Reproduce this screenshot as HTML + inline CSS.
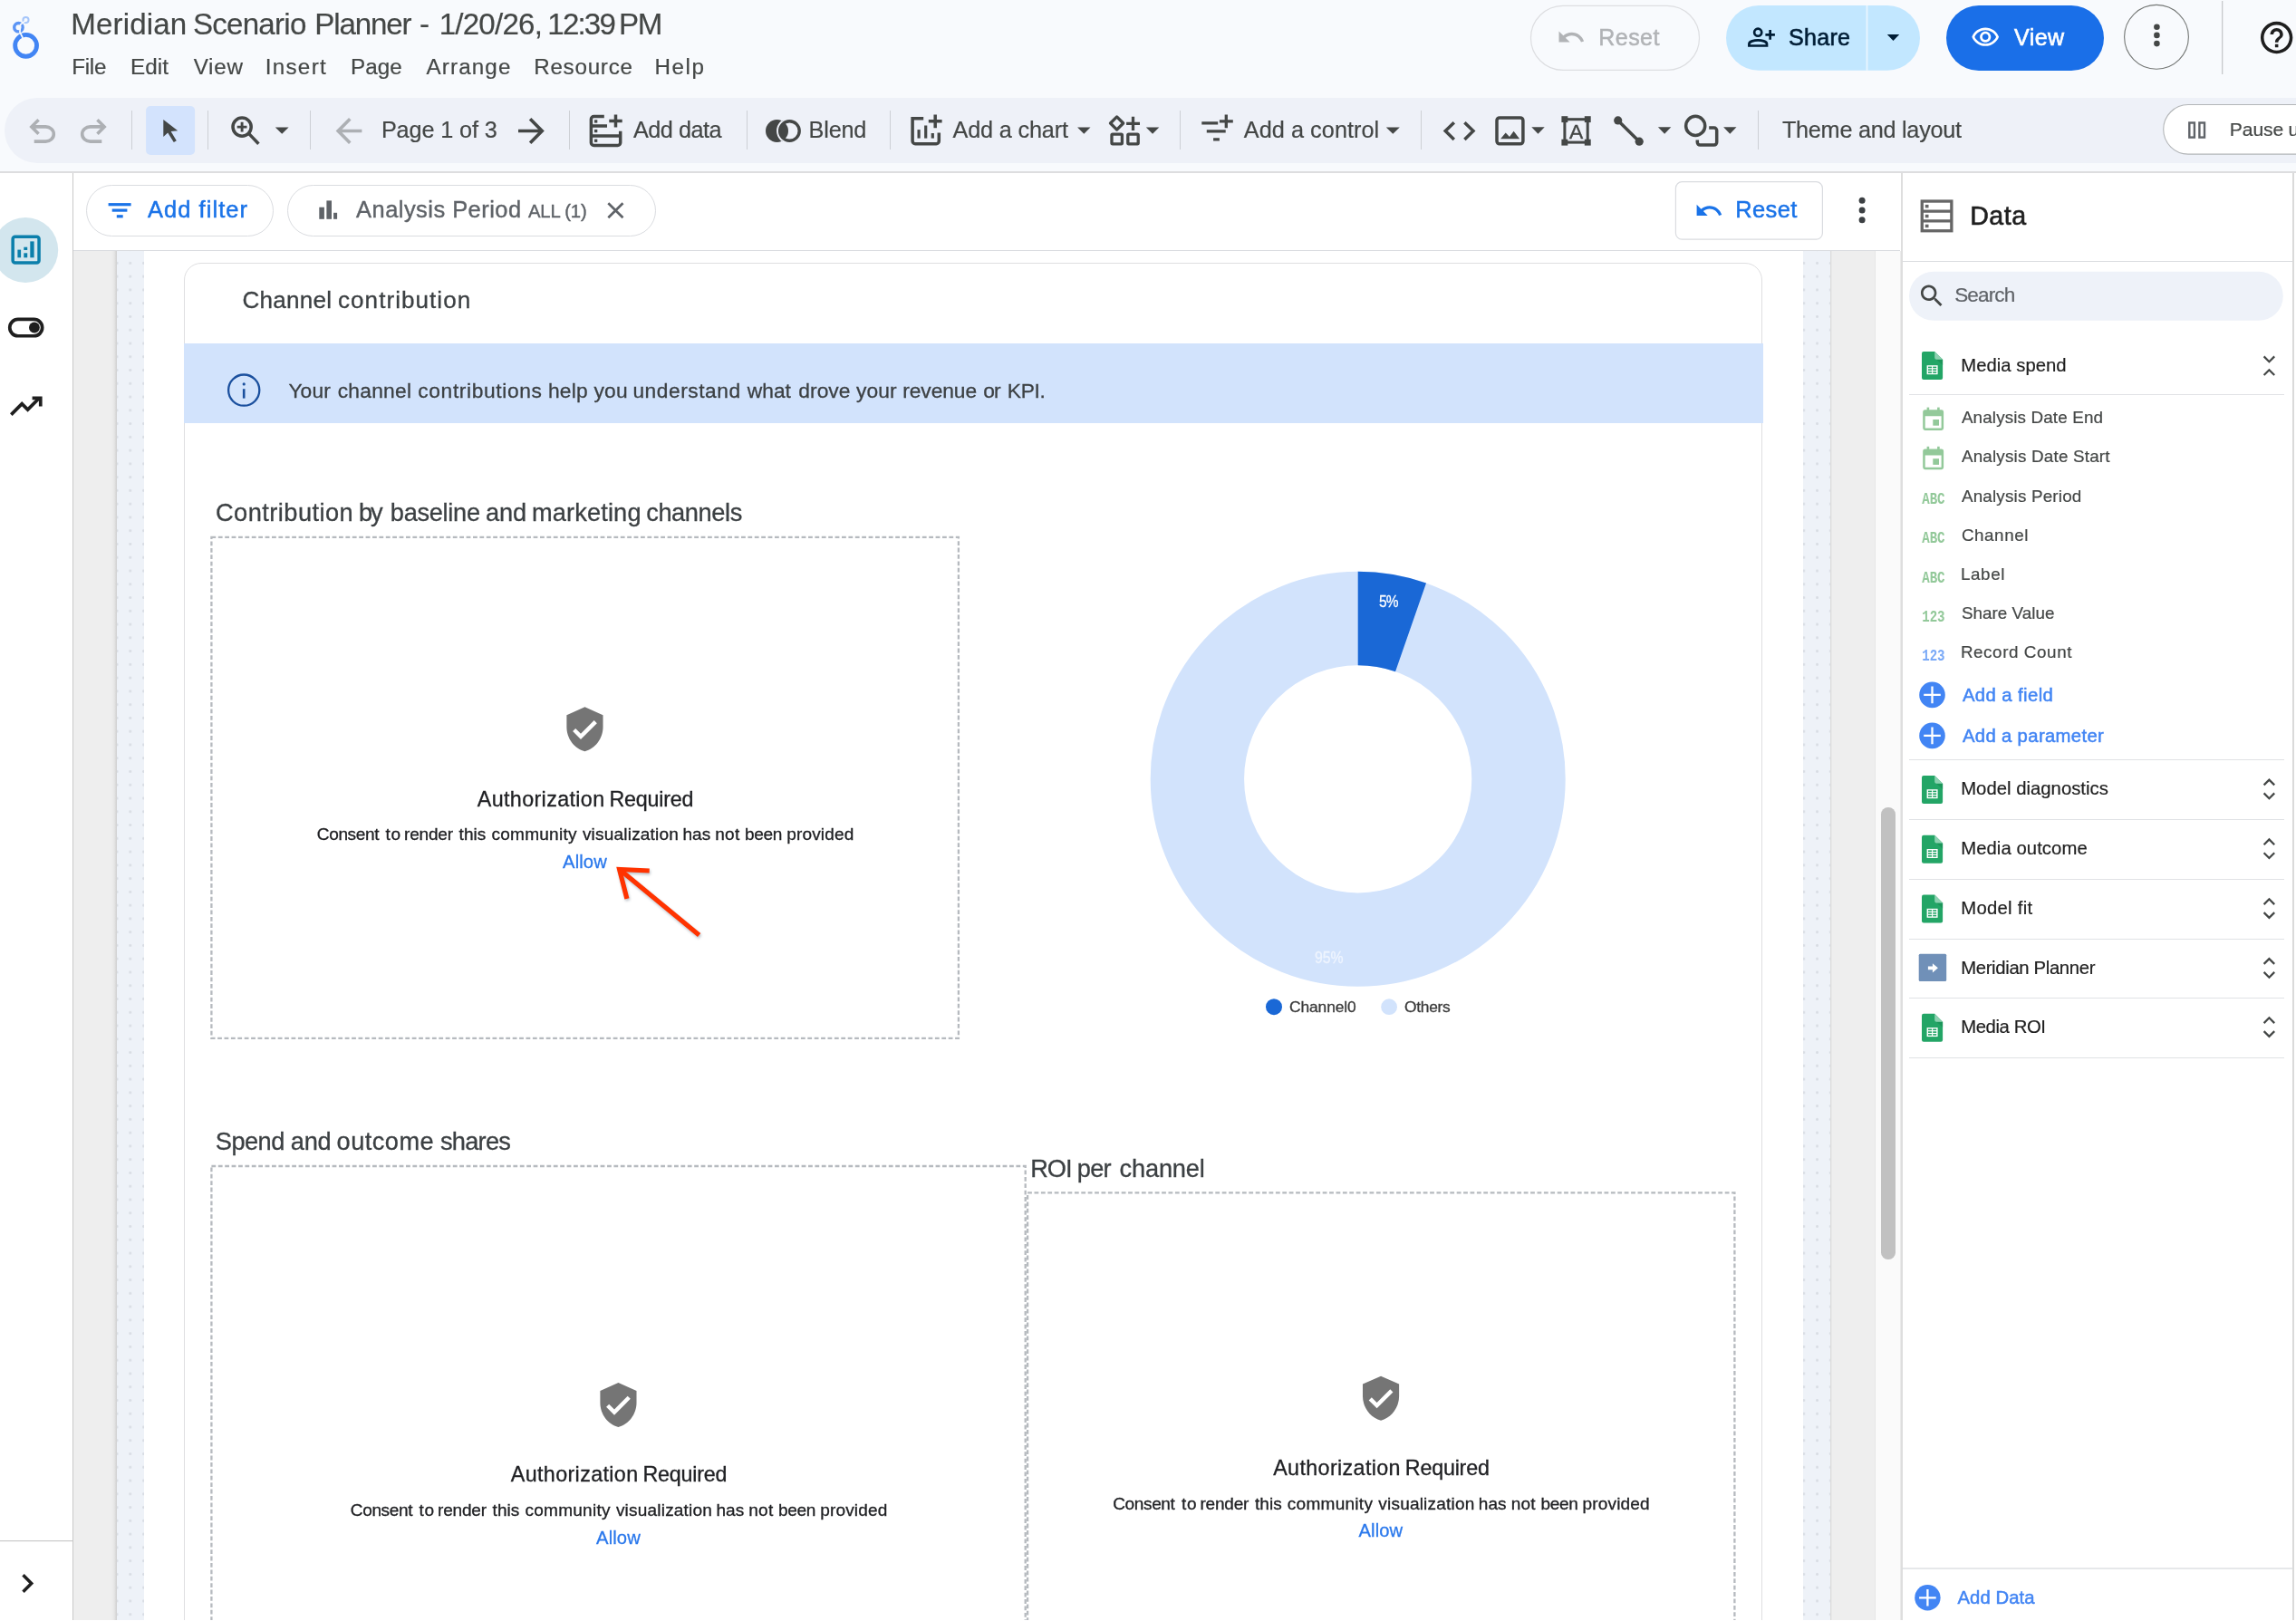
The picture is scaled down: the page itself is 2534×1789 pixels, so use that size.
<!DOCTYPE html>
<html lang="en"><head><meta charset="utf-8"><title>Meridian Scenario Planner - Looker Studio</title>
<style>
*{box-sizing:border-box}
html,body{margin:0;padding:0}
body{width:2534px;height:1789px;overflow:hidden;position:relative;background:#fff;font-family:'Liberation Sans',sans-serif}
.t{position:absolute;white-space:pre;line-height:1;font-kerning:normal}
.tw{position:absolute;left:0;top:0}
.abs{position:absolute}
svg{position:absolute;overflow:visible}
#hdr{will-change:transform;position:absolute;left:0;top:0;width:2534px;height:191px;background:#f8fafd;border-bottom:2px solid #dddddf;overflow:hidden}
#toolbar{position:absolute;left:4.8px;top:107.6px;width:2700px;height:72.4px;border-radius:36.2px;background:#eef1f8}
.sep{position:absolute;top:122px;width:1.4px;height:43px;background:#cdd0d5}
.pill{position:absolute;border-radius:40px}
#rail{will-change:transform;position:absolute;left:0;top:191px;width:81px;height:1598px;background:#fff;border-right:1px solid #c9c9c9}
#fbar{will-change:transform;position:absolute;left:81px;top:191px;width:2018px;height:86px;background:#fff;border-bottom:1px solid #dadce0}
.chip{position:absolute;top:12.7px;height:57px;border:1px solid #dadce0;border-radius:29px;background:#fff}
#stage{will-change:transform;position:absolute;left:81px;top:277px;width:2018px;height:1512px;background:#eeeeee;overflow:hidden}
#panel{will-change:transform;position:absolute;left:2097px;top:191px;width:437px;height:1598px;background:#fff;overflow:hidden}
.hr{position:absolute;left:10px;width:414px;height:1.4px;background:#e0e2e5}
</style></head>
<body>
<header id="hdr">
 <div id="toolbar"></div>
 <div class="sep" style="left:144.8px"></div><div class="sep" style="left:228.8px"></div><div class="sep" style="left:341.7px"></div><div class="sep" style="left:627.8px"></div><div class="sep" style="left:823.7px"></div><div class="sep" style="left:981.7px"></div><div class="sep" style="left:1301.5px"></div><div class="sep" style="left:1567.8px"></div><div class="sep" style="left:1939.7px"></div>
 
<svg width="2534" height="191" viewBox="0 0 2534 191" style="left:0;top:0">
 <!-- looker studio logo -->
 <g fill="none">
  <circle cx="28.6" cy="50.3" r="11.93" stroke="#4285f4" stroke-width="4.85"/>
  <circle cx="20.4" cy="30.2" r="4.7" stroke="#5b94f5" stroke-width="3.4"/>
  <circle cx="28.5" cy="22.1" r="3.05" stroke="#a5c5fa" stroke-width="2"/>
  <polyline points="28.2,22.6 22.6,27.2 21.9,35.4 25.2,42" stroke="#f8fafd" stroke-width="1.7"/>
 </g>
 <!-- reset (disabled) -->
 <rect x="1689.5" y="6.4" width="186" height="71" rx="35.5" fill="none" stroke="#dddee1" stroke-width="1.2"/>
 <svg x="1717.8" y="25" width="32.4" height="32.4" viewBox="0 0 24 24"><path fill="#b1b3b6" d="M12.5 8c-2.65 0-5.05.99-6.9 2.6L2 7v9h9l-3.62-3.62c1.39-1.16 3.16-1.88 5.12-1.88 3.54 0 6.55 2.31 7.6 5.5l2.37-.78C21.08 11.03 17.15 8 12.5 8z"/></svg>
 <!-- share -->
 <rect x="1905" y="6" width="214" height="71.8" rx="35.9" fill="#c2e7ff"/>
 <rect x="2059.6" y="6" width="1.8" height="71.8" fill="#e9f6ff"/>
 <g fill="none" stroke="#001d35" stroke-width="2.7">
  <circle cx="1940.2" cy="35.7" r="4.05"/>
  <path d="M1930.4,50.5 V48.6 C1930.4,45.6 1936,44.4 1940.2,44.4 C1944.4,44.4 1950,45.6 1950,48.6 V50.5 Z" stroke-linejoin="miter"/>
  <path d="M1948.4,38.4 H1958.9 M1953.65,33 V43.8"/>
 </g>
 <polygon points="2082.8,38.1 2096.2,38.1 2089.5,44.9" fill="#001d35"/>
 <!-- view -->
 <rect x="2148" y="6" width="174" height="71.9" rx="35.9" fill="#1a6fe8"/>
 <svg x="2175" y="25.2" width="32.4" height="32.4" viewBox="0 0 24 24"><path fill="#fff" d="M12 6c3.79 0 7.17 2.13 8.82 5.5C19.17 14.87 15.79 17 12 17s-7.17-2.13-8.82-5.5C4.83 8.13 8.21 6 12 6m0-2C7 4 2.73 7.11 1 11.5 2.73 15.89 7 19 12 19s9.27-3.11 11-7.5C21.27 7.11 17 4 12 4zm0 5c1.38 0 2.5 1.12 2.5 2.5S13.38 14 12 14s-2.5-1.12-2.5-2.5S10.620 9 12 9m0-2c-2.48 0-4.5 2.02-4.5 4.5S9.52 16 12 16s4.5-2.02 4.500-4.5S14.48 7 12 7z"/></svg>
 <!-- more -->
 <circle cx="2380" cy="40.8" r="35.4" fill="none" stroke="#747775" stroke-width="1.1"/>
 <circle cx="2380.4" cy="29.8" r="3.3" fill="#444746"/><circle cx="2380.4" cy="38.9" r="3.3" fill="#444746"/><circle cx="2380.4" cy="48.1" r="3.3" fill="#444746"/>
 <rect x="2452" y="1" width="1.3" height="81" fill="#c7c9cc"/>
 <!-- help -->
 <svg x="2491.4" y="20.3" width="42.5" height="42.5" viewBox="0 0 24 24"><path fill="#1f1f1f" d="M11 18h2v-2h-2v2zm1-16C6.48 2 2 6.48 2 12s4.480 10 10 10 10-4.48 10-10S17.52 2 12 2zm0 18c-4.41 0-8-3.59-8-8s3.590-8 8-8 8 3.590 8 8-3.590 8-8 8zm0-14c-2.21 0-4 1.79-4 4h2c0-1.100.9-2 2-2s2 .9 2 2c0 2-3 1.750-3 5h2c0-2.250 3-2.500 3-5 0-2.210-1.790-4-4-4z"/></svg>
</svg>
 
<svg width="2534" height="191" viewBox="0 0 2534 191" style="left:0;top:0">
 <svg x="25.1" y="123.7" width="43.2" height="43.2" viewBox="0 -960 960 960"><path fill="#adb0b4" d="M280-200v-80h284q63 0 109.5-40T720-420q0-60-46.5-100T564-560H312l104 104-56 56-200-200 200-200 56 56-104 104h252q97 0 166.5 63T800-420q0 94-69.5 157T564-200H280Z"/></svg>
 <svg x="81.7" y="123.7" width="43.2" height="43.2" viewBox="0 -960 960 960"><path fill="#adb0b4" transform="translate(960,0) scale(-1,1)" d="M280-200v-80h284q63 0 109.5-40T720-420q0-60-46.5-100T564-560H312l104 104-56 56-200-200 200-200 56 56-104 104h252q97 0 166.5 63T800-420q0 94-69.5 157T564-200H280Z"/></svg>
 <svg x="363.4" y="122.9" width="43.2" height="43.2" viewBox="0 -960 960 960"><path fill="#adb0b4" d="m313-440 224 224-57 56-320-320 320-320 57 56-224 224h487v80H313Z"/></svg>
 <svg x="564.8" y="122.9" width="43.2" height="43.2" viewBox="0 -960 960 960"><path fill="#444746" transform="translate(960,0) scale(-1,1)" d="m313-440 224 224-57 56-320-320 320-320 57 56-224 224h487v80H313Z"/></svg>
 <rect x="161.1" y="117.1" width="54" height="53.8" rx="5" fill="#d3e3fd"/>
 <polygon points="180.3,132 180.3,150.9 185.2,146.5 191.8,156.9 194.8,155.2 188.6,145 196.2,144.3" fill="#444746"/>
 <g fill="none" stroke="#444746" stroke-width="3.5">
  <circle cx="267.1" cy="140.1" r="10.1"/>
  <path d="M274.8,147.6 L285.4,158.7"/>
  <path d="M261.7,140.1 H272.5 M267.1,134.7 V145.5" stroke-width="2.9"/>
 </g>
 <polygon points="303.8,140.4 318.6,140.4 311.20000000000005,147.8" fill="#444746"/>
 <!-- add data -->
 <g fill="none" stroke="#444746" stroke-width="3.5">
  <path d="M666.8,128.6 H655.4 a3,3 0 0 0 -3,3 V157.5 a3,3 0 0 0 3,3 H681.7 a3,3 0 0 0 3,-3 V144.7"/>
  <path d="M652.4,139 H670 M652.4,150 H684.7"/>
  <path d="M672.3,133.5 H686.7 M679.5,126.6 V140.4"/>
 </g>
 <g fill="#444746"><rect x="656" y="132.3" width="3.3" height="3.3"/><rect x="656" y="142.9" width="3.300" height="3.3"/><rect x="656" y="153.600" width="3.3" height="3.3"/></g>
 <!-- blend -->
 <defs><clipPath id="cpA"><circle cx="857.5" cy="144.5" r="12.5"/></clipPath></defs>
 <circle cx="857.5" cy="144.5" r="12.5" fill="#444746"/>
 <circle cx="871.4" cy="144.5" r="10.8" fill="none" stroke="#444746" stroke-width="3.4"/>
 <circle cx="871.4" cy="144.5" r="13.4" fill="none" stroke="#eef1f8" stroke-width="1.9" clip-path="url(#cpA)"/>
 <!-- add chart -->
 <g fill="none" stroke="#444746" stroke-width="3.5">
  <path d="M1019.2,130.700 H1007.1 V155.7 a3,3 0 0 0 3,3 H1033.3 a3,3 0 0 0 3,-3 V146.5"/>
  <path d="M1024.8,133.800 H1039.6 M1032.2,126.400 V141.2"/>
 </g>
 <g fill="#444746"><rect x="1012.5" y="143.1" width="3.2" height="9.5"/><rect x="1020.100" y="138.5" width="3.2" height="14.1"/><rect x="1027.7" y="147" width="3.2" height="5.6"/></g>
 <polygon points="1189.1,140.5 1203.5,140.5 1196.3,147.8" fill="#444746"/>
 <!-- community -->
 <g fill="none" stroke="#444746" stroke-width="3.3" stroke-linejoin="round">
  <polygon points="1232.6,128.9 1239.7,136 1232.6,143.1 1225.5,136"/>
  <rect x="1227" y="148.1" width="11.4" height="10.7" rx="1"/>
  <rect x="1244.8" y="148.1" width="11.400" height="10.7" rx="1"/>
  <path d="M1243.100,136.3 H1258 M1250.5,128.7 V144" stroke-linejoin="miter"/>
 </g>
 <polygon points="1264.8,140.5 1279.3,140.5 1272.05,147.8" fill="#444746"/>
 <!-- control -->
 <g fill="none" stroke="#444746" stroke-width="3.3">
  <path d="M1326.3,135.8 H1344.2 M1331.8,144.8 H1352.7 M1339.100,153.8 H1345.9"/>
  <path d="M1345.9,133.800 H1360.8 M1353.3,126.400 V141.2"/>
 </g>
 <polygon points="1529.8,140.5 1544.8,140.5 1537.3,147.8" fill="#444746"/>
 <!-- code -->
 <g fill="none" stroke="#444746" stroke-width="3.5">
  <polyline points="1604.8,135.200 1595.2,144.600 1604.8,154"/>
  <polyline points="1616.4,135.200 1626,144.600 1616.4,154"/>
  <rect x="1652" y="129.9" width="28.9" height="28.9" rx="3"/>
 </g>
 <polygon points="1656.1,153.3 1661.7,146.5 1666,150.9 1670.6,144.8 1677.1,153.3" fill="#444746"/>
 <polygon points="1690.3,140.3 1704.7,140.3 1697.5,147.8" fill="#444746"/>
 <!-- text box -->
 <g fill="#444746">
  <rect x="1723.4" y="128.200" width="6.9" height="6.9"/><rect x="1748.8" y="128.200" width="6.9" height="6.9"/>
  <rect x="1723.4" y="153.7" width="6.9" height="6.9"/><rect x="1748.8" y="153.7" width="6.9" height="6.9"/>
 </g>
 <rect x="1726.9" y="131.700" width="25.3" height="25.4" fill="none" stroke="#444746" stroke-width="3"/>
 <text x="1739.6" y="153.3" font-family="Liberation Sans, sans-serif" font-size="22.8" text-anchor="middle" fill="#444746" stroke="#444746" stroke-width="0.4">A</text>
 <!-- line -->
 <path d="M1785.7,132.9 L1809.2,156.2" stroke="#444746" stroke-width="3.5" fill="none"/>
 <circle cx="1785.7" cy="132.9" r="4.6" fill="#444746"/><circle cx="1809.2" cy="156.2" r="4.6" fill="#444746"/>
 <polygon points="1829.9,140.3 1844.3,140.3 1837.1,147.8" fill="#444746"/>
 <!-- shape -->
 <g fill="none" stroke="#444746" stroke-width="3.5">
  <circle cx="1871.2" cy="138.9" r="10.55"/>
  <path d="M1886.2,141 H1891.7 a3,3 0 0 1 3,3 V157.1 a3,3 0 0 1 -3,3 H1876.3 a3,3 0 0 1 -3,-3 V154.4"/>
 </g>
 <polygon points="1902.1,140.3 1916.5,140.3 1909.3,147.8" fill="#444746"/>
 <!-- pause button -->
 <rect x="2387.7" y="115.500" width="220" height="54.6" rx="27.3" fill="#fff" stroke="#b3b6b8" stroke-width="1.1"/>
 <g fill="none" stroke="#5f6368" stroke-width="2.4"><rect x="2416.3" y="135.500" width="5.6" height="16.1"/><rect x="2427.400" y="135.500" width="5.6" height="16.1"/></g>
</svg>
 <div id="titlebar"><span class="tw"><span class="t" style="left:78.2px;top:10.0px;font-size:33.12px;color:#444746;letter-spacing:0.149px;-webkit-text-stroke:0.2px #444746">Meridian</span> <span class="t" style="left:212.9px;top:10.0px;font-size:33.12px;color:#444746;letter-spacing:-0.752px;-webkit-text-stroke:0.2px #444746">Scenario</span> <span class="t" style="left:347.3px;top:10.0px;font-size:33.12px;color:#444746;letter-spacing:-1.133px;-webkit-text-stroke:0.2px #444746">Planner</span> <span class="t" style="left:462.9px;top:10.0px;font-size:33.12px;color:#444746;letter-spacing:0px;-webkit-text-stroke:0.2px #444746">-</span> <span class="t" style="left:484.7px;top:10.0px;font-size:33.12px;color:#444746;letter-spacing:-0.781px;-webkit-text-stroke:0.2px #444746">1/20/26,</span> <span class="t" style="left:604.3px;top:10.0px;font-size:33.12px;color:#444746;letter-spacing:-1.835px;-webkit-text-stroke:0.2px #444746">12:39</span> <span class="t" style="left:683.1px;top:10.0px;font-size:33.12px;color:#444746;letter-spacing:-1.384px;-webkit-text-stroke:0.2px #444746">PM</span></span><span class="t" style="left:79.2px;top:61.5px;font-size:24.22px;color:#444746;letter-spacing:-0.285px;-webkit-text-stroke:0.2px #444746">File</span>
<span class="t" style="left:144.0px;top:61.5px;font-size:24.22px;color:#444746;letter-spacing:0.065px;-webkit-text-stroke:0.2px #444746">Edit</span>
<span class="t" style="left:213.7px;top:61.5px;font-size:24.22px;color:#444746;letter-spacing:0.711px;-webkit-text-stroke:0.2px #444746">View</span>
<span class="t" style="left:292.7px;top:61.5px;font-size:24.22px;color:#444746;letter-spacing:1.292px;-webkit-text-stroke:0.2px #444746">Insert</span>
<span class="t" style="left:387.0px;top:61.5px;font-size:24.22px;color:#444746;letter-spacing:0.036px;-webkit-text-stroke:0.2px #444746">Page</span>
<span class="t" style="left:470.4px;top:61.5px;font-size:24.22px;color:#444746;letter-spacing:1.151px;-webkit-text-stroke:0.2px #444746">Arrange</span>
<span class="t" style="left:589.2px;top:61.5px;font-size:24.22px;color:#444746;letter-spacing:0.731px;-webkit-text-stroke:0.2px #444746">Resource</span>
<span class="t" style="left:722.6px;top:61.5px;font-size:24.22px;color:#444746;letter-spacing:1.52px;-webkit-text-stroke:0.2px #444746">Help</span>
<span class="t" style="left:1764.3px;top:28.7px;font-size:25.05px;color:#b1b3b6;letter-spacing:0.407px;font-weight:500;-webkit-text-stroke:0.5px #b1b3b6">Reset</span>
<span class="t" style="left:1974.0px;top:28.7px;font-size:25.05px;color:#001d35;letter-spacing:0.298px;font-weight:500;-webkit-text-stroke:0.6px #001d35">Share</span>
<span class="t" style="left:2223.1px;top:28.6px;font-size:25.05px;color:#ffffff;letter-spacing:0.384px;font-weight:500;-webkit-text-stroke:0.6px #ffffff">View</span>
</div>
 <nav id="tools"><span class="t" style="left:420.9px;top:130.8px;font-size:25.25px;color:#444746;letter-spacing:-0.132px;-webkit-text-stroke:0.2px #444746">Page 1 of 3</span>
<span class="t" style="left:698.9px;top:130.8px;font-size:25.25px;color:#444746;letter-spacing:-0.478px;-webkit-text-stroke:0.2px #444746">Add data</span>
<span class="t" style="left:892.6px;top:130.8px;font-size:25.25px;color:#444746;letter-spacing:-0.209px;-webkit-text-stroke:0.2px #444746">Blend</span>
<span class="t" style="left:1051.5px;top:130.8px;font-size:25.25px;color:#444746;letter-spacing:-0.172px;-webkit-text-stroke:0.2px #444746">Add a chart</span>
<span class="t" style="left:1372.8px;top:130.8px;font-size:25.25px;color:#444746;letter-spacing:0.052px;-webkit-text-stroke:0.2px #444746">Add a control</span>
<span class="t" style="left:1966.9px;top:130.8px;font-size:25.25px;color:#444746;letter-spacing:-0.261px;-webkit-text-stroke:0.2px #444746">Theme and layout</span>
<span class="tw"><span class="t" style="left:2460.8px;top:132.4px;font-size:21.11px;color:#444746;letter-spacing:-0.079px;-webkit-text-stroke:0.2px #444746">Pause</span> <span class="t" style="left:2525.6px;top:132.4px;font-size:21.11px;color:#444746;letter-spacing:0.222px;-webkit-text-stroke:0.2px #444746">updates</span></span></nav>
</header>
<aside id="rail">
<svg width="81" height="1598" viewBox="0 191 81 1598" style="left:0;top:0">
 <circle cx="28.1" cy="276" r="36.1" fill="#d3e6ee"/>
 <rect x="14.15" y="261.15" width="28.9" height="28.8" rx="2.5" fill="none" stroke="#0b7fab" stroke-width="3.5"/>
 <g fill="#0b7fab"><rect x="19.4" y="275.600" width="3.7" height="8.7"/><rect x="26.3" y="272.7" width="3.9" height="3.300"/><rect x="26.3" y="279.3" width="3.9" height="5"/><rect x="33.3" y="266.400" width="4.3" height="17.9"/></g>
 <rect x="10.75" y="352.45" width="35.9" height="18.300" rx="9.15" fill="none" stroke="#1f1f1f" stroke-width="3.7"/>
 <circle cx="37.9" cy="361.5" r="5.9" fill="#1f1f1f"/>
 <g fill="none" stroke="#1f1f1f" stroke-width="3.7"><polyline points="12.3,457.6 24.2,445.7 30.6,452.1 43.4,439.3"/><path d="M35.6,439.35 H44.75 V448.5"/></g>
 <rect x="0" y="1700" width="80" height="1.2" fill="#c9c9c9"/>
 <polyline points="25.5,1738.3 34.7,1747.5 25.500,1756.7" fill="none" stroke="#1f1f1f" stroke-width="3.5"/>
</svg></aside>
<section id="fbar">
 <div class="chip" style="left:14.2px;width:206.8px"></div>
 <div class="chip" style="left:236.2px;width:406.7px"></div>
 
<svg width="2018" height="86" viewBox="81 191 2018 86" style="left:0;top:0">
 <g fill="#1a73e8"><rect x="119.6" y="224.100" width="25" height="3.2"/><rect x="123.700" y="230.500" width="16.7" height="3.2"/><rect x="128.8" y="237.200" width="6.9" height="3.200"/></g>
 <g fill="#5f6368"><rect x="352.3" y="228.7" width="5.6" height="13.1"/><rect x="360.4" y="221.4" width="5.600" height="20.4"/><rect x="368.1" y="234.8" width="4" height="7"/></g>
 <path d="M671.3,224.300 L687.5,240.300 M687.5,224.300 L671.3,240.300" stroke="#5f6368" stroke-width="2.7" fill="none"/>
 <rect x="1849.4" y="200.700" width="162" height="63.5" rx="7" fill="#fff" stroke="#dadce0" stroke-width="1.2"/>
 <svg x="1869.9" y="216.35" width="32.4" height="32.4" viewBox="0 0 24 24"><path fill="#1a73e8" d="M12.5 8c-2.650 0-5.050.99-6.9 2.600L2 7v9h9l-3.620-3.620c1.390-1.160 3.160-1.880 5.120-1.880 3.540 0 6.550 2.310 7.600 5.500l2.370-.78C21.080 11.030 17.150 8 12.500 8z"/></svg>
 <g fill="#3c4043"><circle cx="2055.1" cy="221.300" r="3.5"/><circle cx="2055.1" cy="232.100" r="3.5"/><circle cx="2055.100" cy="242.800" r="3.5"/></g>
</svg>
 <span class="t" style="left:81.9px;top:28.0px;font-size:25.46px;color:#1a73e8;letter-spacing:1.081px;font-weight:500;-webkit-text-stroke:0.5px #1a73e8">Add filter</span>
<span class="t" style="left:312.1px;top:28.0px;font-size:25.46px;color:#5f6368;letter-spacing:0.466px;font-weight:500;-webkit-text-stroke:0.4px #5f6368">Analysis Period</span>
<span class="t" style="left:502.0px;top:31.7px;font-size:20.29px;color:#5f6368;letter-spacing:-0.176px;font-weight:500;-webkit-text-stroke:0.4px #5f6368">ALL (1)</span>
<span class="t" style="left:1834.3px;top:27.9px;font-size:25.46px;color:#1a73e8;letter-spacing:0.37px;font-weight:500;-webkit-text-stroke:0.5px #1a73e8">Reset</span>

</section>
<main id="stage">
 <div class="abs" style="left:42px;top:0;width:6px;height:1512px;background:linear-gradient(90deg,#eee,#e6e6e6 50%,#cfcfcf)"></div>
 <div class="abs" style="left:47.9px;top:0;width:29.7px;height:1512px;background-color:#eef2f8;background-image:radial-gradient(circle,#d9dde4 1.2px,rgba(217,221,228,0) 1.7px);background-size:14.77px 14.77px;background-position:-7.39px 6px"></div>
 <div class="abs" style="left:77.6px;top:0;width:1831.5px;height:1512px;background:#fff"></div>
 <div class="abs" style="left:1909.1px;top:0;width:29.5px;height:1512px;background-color:#eef2f8;background-image:radial-gradient(circle,#d9dde4 1.2px,rgba(217,221,228,0) 1.7px);background-size:14.77px 14.77px;background-position:-7.39px 6px;background-position:-6.6px 6px"></div>
 <div class="abs" style="left:1938.6px;top:0;width:2px;height:1512px;background:linear-gradient(90deg,#d6d6d6,#eee)"></div>
 <div class="abs" style="left:1988px;top:0;width:29px;height:1512px;background:#fafafa;border-left:1px solid #e6e6e6"></div>
 <div class="abs" style="left:1995.3px;top:614px;width:15.5px;height:498.5px;border-radius:7.8px;background:#c1c1c1"></div>
 <article class="abs" style="left:121.7px;top:13.3px;width:1742.6px;height:1600px;border:1.8px solid #dfdfe1;border-radius:19px;background:#fff"></article>
 <div class="abs" style="left:121.5px;top:102.1px;width:1743px;height:88.2px;background:#d2e3fc"></div>
 
<svg width="2018" height="1512" viewBox="81 277 2018 1512" style="left:0;top:0">
 <!-- info icon -->
 <circle cx="269.2" cy="430.6" r="17.1" fill="none" stroke="#1b509e" stroke-width="2.3"/>
 <circle cx="269.2" cy="423.9" r="1.6" fill="#1b509e"/><rect x="267.9" y="429.200" width="2.6" height="10.4" fill="#1b509e"/>
 <!-- dashed placeholders -->
 <rect x="233.4" y="592.9" width="824.5" height="552.9" fill="none" stroke="#b6babf" stroke-width="2.3" stroke-dasharray="4.8 2.6"/>
 <rect x="233.4" y="1287.0" width="898.3" height="533.0" fill="none" stroke="#b6babf" stroke-width="2.3" stroke-dasharray="4.8 2.6"/>
 <rect x="1134.1" y="1316.4" width="780.3" height="503.6" fill="none" stroke="#b6babf" stroke-width="2.3" stroke-dasharray="4.8 2.6"/>
 <svg x="618.7" y="778.1" width="53.5" height="53.5" viewBox="0 0 24 24"><path fill="#757575" d="M12 1L3 5v6c0 5.55 3.84 10.74 9 12 5.16-1.26 9-6.45 9-12V5l-9-4zm-2 16l-4-4 1.41-1.41L10 14.17l6.59-6.59L18 9l-8 8z"/></svg>
 <svg x="655.7" y="1523.8" width="53.5" height="53.5" viewBox="0 0 24 24"><path fill="#757575" d="M12 1L3 5v6c0 5.55 3.84 10.74 9 12 5.16-1.26 9-6.45 9-12V5l-9-4zm-2 16l-4-4 1.41-1.41L10 14.17l6.59-6.59L18 9l-8 8z"/></svg>
 <svg x="1497.3" y="1516.4" width="53.5" height="53.5" viewBox="0 0 24 24"><path fill="#757575" d="M12 1L3 5v6c0 5.55 3.84 10.74 9 12 5.16-1.26 9-6.45 9-12V5l-9-4zm-2 16l-4-4 1.41-1.41L10 14.17l6.59-6.59L18 9l-8 8z"/></svg>
 <!-- donut -->
 <circle cx="1498.7" cy="859.8" r="177.30" fill="none" stroke="#d2e3fc" stroke-width="103.40"/>
 <path d="M1498.70,630.80 A229.0,229.0 0 0 1 1574.01,643.54 L1540.01,741.19 A125.6,125.6 0 0 0 1498.70,734.20 Z" fill="#1a68d6"/>
 <circle cx="1406" cy="1111.2" r="9" fill="#1a68d6"/><circle cx="1533.1" cy="1111.2" r="8.9" fill="#d2e3fc"/>
 <!-- annotation arrow -->
 <g fill="none" stroke="#ff3300" stroke-width="5.2" stroke-linecap="butt" stroke-linejoin="miter" stroke-miterlimit="10" style="filter:drop-shadow(1.5px 2px 1.5px rgba(60,80,100,.35))">
  <path d="M716.7,961 L683.6,959.5 L691.9,991.9"/>
  <path d="M684.6,960.3 L771.6,1032"/>
 </g>
</svg>
 <span class="tw"><span class="t" style="left:186.4px;top:41.2px;font-size:26.08px;color:#3c4043;letter-spacing:0.258px;-webkit-text-stroke:0.3px #3c4043">Channel</span> <span class="t" style="left:292.0px;top:41.2px;font-size:26.08px;color:#3c4043;letter-spacing:1.035px;-webkit-text-stroke:0.3px #3c4043">contribution</span></span><span class="tw"><span class="t" style="left:237.4px;top:143.3px;font-size:22.77px;color:#3c4043;letter-spacing:0.128px;-webkit-text-stroke:0.3px #3c4043">Your</span> <span class="t" style="left:291.7px;top:143.3px;font-size:22.77px;color:#3c4043;letter-spacing:0.252px;-webkit-text-stroke:0.3px #3c4043">channel</span> <span class="t" style="left:380.3px;top:143.3px;font-size:22.77px;color:#3c4043;letter-spacing:0.625px;-webkit-text-stroke:0.3px #3c4043">contributions</span> <span class="t" style="left:523.9px;top:143.3px;font-size:22.77px;color:#3c4043;letter-spacing:0.24px;-webkit-text-stroke:0.3px #3c4043">help</span> <span class="t" style="left:574.5px;top:143.3px;font-size:22.77px;color:#3c4043;letter-spacing:0.228px;-webkit-text-stroke:0.3px #3c4043">you</span> <span class="t" style="left:617.4px;top:143.3px;font-size:22.77px;color:#3c4043;letter-spacing:0.538px;-webkit-text-stroke:0.3px #3c4043">understand</span> <span class="t" style="left:743.8px;top:143.3px;font-size:22.77px;color:#3c4043;letter-spacing:0.012px;-webkit-text-stroke:0.3px #3c4043">what</span> <span class="t" style="left:800.3px;top:143.3px;font-size:22.77px;color:#3c4043;letter-spacing:0.053px;-webkit-text-stroke:0.3px #3c4043">drove</span> <span class="t" style="left:864.1px;top:143.3px;font-size:22.77px;color:#3c4043;letter-spacing:0.065px;-webkit-text-stroke:0.3px #3c4043">your</span> <span class="t" style="left:915.3px;top:143.3px;font-size:22.77px;color:#3c4043;letter-spacing:-0.085px;-webkit-text-stroke:0.3px #3c4043">revenue</span> <span class="t" style="left:1004.2px;top:143.3px;font-size:22.77px;color:#3c4043;letter-spacing:-0.861px;-webkit-text-stroke:0.3px #3c4043">or</span> <span class="t" style="left:1030.8px;top:143.3px;font-size:22.77px;color:#3c4043;letter-spacing:-0.331px;-webkit-text-stroke:0.3px #3c4043">KPI.</span></span><span class="tw"><span class="t" style="left:157.0px;top:275.1px;font-size:27.22px;color:#3c4043;letter-spacing:0.452px;-webkit-text-stroke:0.3px #3c4043">Contribution</span> <span class="t" style="left:315.0px;top:275.1px;font-size:27.22px;color:#3c4043;letter-spacing:-2.238px;-webkit-text-stroke:0.3px #3c4043">by</span> <span class="t" style="left:349.8px;top:275.1px;font-size:27.22px;color:#3c4043;letter-spacing:-0.308px;-webkit-text-stroke:0.3px #3c4043">baseline</span> <span class="t" style="left:454.9px;top:275.1px;font-size:27.22px;color:#3c4043;letter-spacing:-0.038px;-webkit-text-stroke:0.3px #3c4043">and</span> <span class="t" style="left:505.9px;top:275.1px;font-size:27.22px;color:#3c4043;letter-spacing:0.141px;-webkit-text-stroke:0.3px #3c4043">marketing</span> <span class="t" style="left:632.2px;top:275.1px;font-size:27.22px;color:#3c4043;letter-spacing:-0.406px;-webkit-text-stroke:0.3px #3c4043">channels</span></span><span class="tw"><span class="t" style="left:156.8px;top:969.4px;font-size:27.22px;color:#3c4043;letter-spacing:-0.542px;-webkit-text-stroke:0.3px #3c4043">Spend</span> <span class="t" style="left:239.8px;top:969.4px;font-size:27.22px;color:#3c4043;letter-spacing:-0.288px;-webkit-text-stroke:0.3px #3c4043">and</span> <span class="t" style="left:290.6px;top:969.4px;font-size:27.22px;color:#3c4043;letter-spacing:0.457px;-webkit-text-stroke:0.3px #3c4043">outcome</span> <span class="t" style="left:405.0px;top:969.4px;font-size:27.22px;color:#3c4043;letter-spacing:-0.757px;-webkit-text-stroke:0.3px #3c4043">shares</span></span><span class="tw"><span class="t" style="left:1056.3px;top:999.2px;font-size:27.22px;color:#3c4043;letter-spacing:-1.114px;-webkit-text-stroke:0.3px #3c4043">ROI</span> <span class="t" style="left:1107.8px;top:999.2px;font-size:27.22px;color:#3c4043;letter-spacing:-0.738px;-webkit-text-stroke:0.3px #3c4043">per</span> <span class="t" style="left:1154.5px;top:999.2px;font-size:27.22px;color:#3c4043;letter-spacing:-0.166px;-webkit-text-stroke:0.3px #3c4043">channel</span></span><span class="tw"><span class="t" style="left:445.8px;top:593.7px;font-size:23.29px;color:#202124;letter-spacing:0.371px;-webkit-text-stroke:0.3px #202124">Authorization</span> <span class="t" style="left:591.4px;top:593.7px;font-size:23.29px;color:#202124;letter-spacing:-0.204px;-webkit-text-stroke:0.3px #202124">Required</span></span><span class="tw"><span class="t" style="left:268.8px;top:634.4px;font-size:19.04px;color:#202124;letter-spacing:-0.366px;-webkit-text-stroke:0.3px #202124">Consent</span> <span class="t" style="left:344.5px;top:634.4px;font-size:19.04px;color:#202124;letter-spacing:0.713px;-webkit-text-stroke:0.3px #202124">to</span> <span class="t" style="left:365.1px;top:634.4px;font-size:19.04px;color:#202124;letter-spacing:-0.215px;-webkit-text-stroke:0.3px #202124">render</span> <span class="t" style="left:425.6px;top:634.4px;font-size:19.04px;color:#202124;letter-spacing:0.033px;-webkit-text-stroke:0.3px #202124">this</span> <span class="t" style="left:461.4px;top:634.4px;font-size:19.04px;color:#202124;letter-spacing:0.264px;-webkit-text-stroke:0.3px #202124">community</span> <span class="t" style="left:561.9px;top:634.4px;font-size:19.04px;color:#202124;letter-spacing:0.193px;-webkit-text-stroke:0.3px #202124">visualization</span> <span class="t" style="left:672.4px;top:634.4px;font-size:19.04px;color:#202124;letter-spacing:0.066px;-webkit-text-stroke:0.3px #202124">has</span> <span class="t" style="left:708.3px;top:634.4px;font-size:19.04px;color:#202124;letter-spacing:0.216px;-webkit-text-stroke:0.3px #202124">not</span> <span class="t" style="left:741.0px;top:634.4px;font-size:19.04px;color:#202124;letter-spacing:-0.318px;-webkit-text-stroke:0.3px #202124">been</span> <span class="t" style="left:787.2px;top:634.4px;font-size:19.04px;color:#202124;letter-spacing:0.155px;-webkit-text-stroke:0.3px #202124">provided</span></span><span class="t" style="left:540.1px;top:664.0px;font-size:20.18px;color:#2a78ec;letter-spacing:0.116px;-webkit-text-stroke:0.3px #2a78ec">Allow</span>
<span class="tw"><span class="t" style="left:482.8px;top:1339.4px;font-size:23.29px;color:#202124;letter-spacing:0.371px;-webkit-text-stroke:0.3px #202124">Authorization</span> <span class="t" style="left:628.4px;top:1339.4px;font-size:23.29px;color:#202124;letter-spacing:-0.204px;-webkit-text-stroke:0.3px #202124">Required</span></span><span class="tw"><span class="t" style="left:305.8px;top:1380.1px;font-size:19.04px;color:#202124;letter-spacing:-0.366px;-webkit-text-stroke:0.3px #202124">Consent</span> <span class="t" style="left:381.5px;top:1380.1px;font-size:19.04px;color:#202124;letter-spacing:0.713px;-webkit-text-stroke:0.3px #202124">to</span> <span class="t" style="left:402.1px;top:1380.1px;font-size:19.04px;color:#202124;letter-spacing:-0.215px;-webkit-text-stroke:0.3px #202124">render</span> <span class="t" style="left:462.6px;top:1380.1px;font-size:19.04px;color:#202124;letter-spacing:0.033px;-webkit-text-stroke:0.3px #202124">this</span> <span class="t" style="left:498.4px;top:1380.1px;font-size:19.04px;color:#202124;letter-spacing:0.264px;-webkit-text-stroke:0.3px #202124">community</span> <span class="t" style="left:598.9px;top:1380.1px;font-size:19.04px;color:#202124;letter-spacing:0.193px;-webkit-text-stroke:0.3px #202124">visualization</span> <span class="t" style="left:709.4px;top:1380.1px;font-size:19.04px;color:#202124;letter-spacing:0.066px;-webkit-text-stroke:0.3px #202124">has</span> <span class="t" style="left:745.3px;top:1380.1px;font-size:19.04px;color:#202124;letter-spacing:0.216px;-webkit-text-stroke:0.3px #202124">not</span> <span class="t" style="left:778.0px;top:1380.1px;font-size:19.04px;color:#202124;letter-spacing:-0.318px;-webkit-text-stroke:0.3px #202124">been</span> <span class="t" style="left:824.2px;top:1380.1px;font-size:19.04px;color:#202124;letter-spacing:0.155px;-webkit-text-stroke:0.3px #202124">provided</span></span><span class="t" style="left:577.1px;top:1409.7px;font-size:20.18px;color:#2a78ec;letter-spacing:0.116px;-webkit-text-stroke:0.3px #2a78ec">Allow</span>
<span class="tw"><span class="t" style="left:1324.2px;top:1332.0px;font-size:23.29px;color:#202124;letter-spacing:0.371px;-webkit-text-stroke:0.3px #202124">Authorization</span> <span class="t" style="left:1469.8px;top:1332.0px;font-size:23.29px;color:#202124;letter-spacing:-0.204px;-webkit-text-stroke:0.3px #202124">Required</span></span><span class="tw"><span class="t" style="left:1147.2px;top:1372.7px;font-size:19.04px;color:#202124;letter-spacing:-0.366px;-webkit-text-stroke:0.3px #202124">Consent</span> <span class="t" style="left:1222.9px;top:1372.7px;font-size:19.04px;color:#202124;letter-spacing:0.713px;-webkit-text-stroke:0.3px #202124">to</span> <span class="t" style="left:1243.5px;top:1372.7px;font-size:19.04px;color:#202124;letter-spacing:-0.215px;-webkit-text-stroke:0.3px #202124">render</span> <span class="t" style="left:1304.0px;top:1372.7px;font-size:19.04px;color:#202124;letter-spacing:0.033px;-webkit-text-stroke:0.3px #202124">this</span> <span class="t" style="left:1339.8px;top:1372.7px;font-size:19.04px;color:#202124;letter-spacing:0.264px;-webkit-text-stroke:0.3px #202124">community</span> <span class="t" style="left:1440.3px;top:1372.7px;font-size:19.04px;color:#202124;letter-spacing:0.193px;-webkit-text-stroke:0.3px #202124">visualization</span> <span class="t" style="left:1550.8px;top:1372.7px;font-size:19.04px;color:#202124;letter-spacing:0.066px;-webkit-text-stroke:0.3px #202124">has</span> <span class="t" style="left:1586.7px;top:1372.7px;font-size:19.04px;color:#202124;letter-spacing:0.216px;-webkit-text-stroke:0.3px #202124">not</span> <span class="t" style="left:1619.4px;top:1372.7px;font-size:19.04px;color:#202124;letter-spacing:-0.318px;-webkit-text-stroke:0.3px #202124">been</span> <span class="t" style="left:1665.6px;top:1372.7px;font-size:19.04px;color:#202124;letter-spacing:0.155px;-webkit-text-stroke:0.3px #202124">provided</span></span><span class="t" style="left:1418.5px;top:1402.3px;font-size:20.18px;color:#2a78ec;letter-spacing:0.116px;-webkit-text-stroke:0.3px #2a78ec">Allow</span>
<span class="t" style="left:1440.8px;top:377.6px;font-size:18.22px;color:#ffffff;letter-spacing:-0.947px;transform:scaleX(0.85);transform-origin:0 0;-webkit-text-stroke:0.3px #ffffff">5%</span>
<span class="t" style="left:1369.7px;top:771.4px;font-size:18.22px;color:#eef4fe;letter-spacing:-0.078px;transform:scaleX(0.87);transform-origin:0 0;-webkit-text-stroke:0.3px #eef4fe">95%</span>
<span class="t" style="left:1342.1px;top:825.5px;font-size:17.39px;color:#3a3a3a;letter-spacing:-0.118px;-webkit-text-stroke:0.3px #3a3a3a">Channel0</span>
<span class="t" style="left:1469.0px;top:825.5px;font-size:17.39px;color:#3a3a3a;letter-spacing:-0.271px;-webkit-text-stroke:0.3px #3a3a3a">Others</span>

</main>
<aside id="panel">
 <div class="abs" style="left:0;top:86px;width:1.3px;height:1512px;background:#ebebeb"></div>
 <div class="abs" style="left:1.3px;top:0;width:1.6px;height:1598px;background:#dedede"></div>
 <div class="abs" style="left:2.7px;top:96.5px;width:431px;height:1.4px;background:#dadce0"></div>
 <div class="abs" style="left:433.4px;top:0;width:2px;height:1598px;background:#dadada"></div>
 <div class="hr" style="top:243.9px"></div><div class="hr" style="top:646.5px"></div><div class="hr" style="top:712.8px"></div><div class="hr" style="top:778.6px"></div><div class="hr" style="top:844.5px"></div><div class="hr" style="top:909.7px"></div><div class="hr" style="top:975.5px"></div>
 
<svg width="437" height="1598" viewBox="2097 191 437 1598" style="left:0;top:0">
 <!-- data icon -->
 <rect x="2121.25" y="222.05" width="32.6" height="32.7" fill="none" stroke="#666" stroke-width="3.3"/>
 <path d="M2121,233.2 H2154 M2121,243.9 H2154" stroke="#666" stroke-width="3.2" fill="none"/>
 <g fill="#666"><rect x="2124.8" y="225.900" width="3.7" height="3.5"/><rect x="2124.8" y="236.800" width="3.7" height="3.5"/><rect x="2124.8" y="247.700" width="3.7" height="3.5"/></g>
 <!-- search -->
 <rect x="2107" y="299.700" width="412.8" height="54.1" rx="27" fill="#eef2f9"/>
 <svg x="2115.9" y="310.5" width="32.3" height="32.3" viewBox="0 0 24 24"><path fill="#444746" d="M15.500 14h-.79l-.28-.27C15.410 12.590 16 11.110 16 9.500 16 5.910 13.090 3 9.500 3S3 5.910 3 9.500 5.910 16 9.500 16c1.610 0 3.090-.59 4.230-1.570l.27.28v.79l5 4.990L20.490 19l-4.990-5zm-6 0C7.010 14 5 11.990 5 9.500S7.010 5 9.500 5 14 7.010 14 9.500 11.990 14 9.500 14z"/></svg>
 <g transform="translate(2121,387.9)">
  <path d="M2,0 H14.2 L23.1,8.9 V29 a2,2 0 0 1 -2,2 H2 a2,2 0 0 1 -2,-2 V2 a2,2 0 0 1 2,-2 z" fill="#23a566"/>
  <path d="M16.2,8.9 H23.1 V15 z" fill="#188a50" opacity=".55"/>
  <path d="M14.2,0 L23.1,8.9 H16.2 a2,2 0 0 1 -2,-2 z" fill="#8ed1b1"/>
  <rect x="5.6" y="15.3" width="12" height="10" fill="#fff"/>
  <g fill="#23a566"><rect x="7" y="16.7" width="4" height="1.6"/><rect x="12.2" y="16.7" width="4" height="1.6"/><rect x="7" y="19.500" width="4" height="1.6"/><rect x="12.2" y="19.500" width="4" height="1.6"/><rect x="7" y="22.3" width="4" height="1.6"/><rect x="12.2" y="22.3" width="4" height="1.6"/></g>
 </g>
 <polyline points="2498.6,393.40000000000003 2504.3999999999996,399.20000000000005 2510.2,393.40000000000003" fill="none" stroke="#444746" stroke-width="2.2"/><polyline points="2498.6,414.0 2504.3999999999996,408.20000000000005 2510.2,414.0" fill="none" stroke="#444746" stroke-width="2.2"/>
 <g fill="#93c99a"><rect x="2126.6" y="449.6" width="2.6" height="4"/><rect x="2138.1" y="449.6" width="2.6" height="4"/>
  <path d="M2124.6,452.20000000000005 H2142.700 a2.4,2.4 0 0 1 2.4,2.4 V472.6 a2.400,2.4 0 0 1 -2.4,2.4 H2124.6 a2.4,2.4 0 0 1 -2.4,-2.4 V454.6 a2.4,2.4 0 0 1 2.4,-2.4 z M2124.7,459.20000000000005 V472.5 H2142.6 V459.20000000000005 z" fill-rule="evenodd"/>
  <rect x="2133.3" y="463.0" width="6.7" height="6.7"/></g>
 <g fill="#93c99a"><rect x="2126.6" y="492.8" width="2.6" height="4"/><rect x="2138.1" y="492.8" width="2.6" height="4"/>
  <path d="M2124.6,495.40000000000003 H2142.700 a2.4,2.4 0 0 1 2.4,2.4 V515.8 a2.400,2.4 0 0 1 -2.4,2.4 H2124.6 a2.4,2.4 0 0 1 -2.4,-2.4 V497.8 a2.4,2.4 0 0 1 2.4,-2.4 z M2124.7,502.40000000000003 V515.7 H2142.6 V502.40000000000003 z" fill-rule="evenodd"/>
  <rect x="2133.3" y="506.2" width="6.7" height="6.7"/></g>
 <text x="2121.2" y="556.1" textLength="25.4" lengthAdjust="spacingAndGlyphs" font-family="Liberation Mono, monospace" font-weight="700" font-size="18" fill="#93c99a">ABC</text>
 <text x="2121.2" y="599.3" textLength="25.4" lengthAdjust="spacingAndGlyphs" font-family="Liberation Mono, monospace" font-weight="700" font-size="18" fill="#93c99a">ABC</text>
 <text x="2121.2" y="642.5" textLength="25.4" lengthAdjust="spacingAndGlyphs" font-family="Liberation Mono, monospace" font-weight="700" font-size="18" fill="#93c99a">ABC</text>
 <text x="2121.2" y="685.7" textLength="25.4" lengthAdjust="spacingAndGlyphs" font-family="Liberation Mono, monospace" font-weight="700" font-size="18" fill="#93c99a">123</text>
 <text x="2121.2" y="728.9" textLength="25.4" lengthAdjust="spacingAndGlyphs" font-family="Liberation Mono, monospace" font-weight="700" font-size="18" fill="#7baaf7">123</text>
 <circle cx="2132.5" cy="766.9" r="14.3" fill="#4285f4"/><path d="M2123.2,766.9 H2141.8 M2132.5,757.6 V776.1999999999999" stroke="#fff" stroke-width="2.3" fill="none"/>
 <circle cx="2132.5" cy="811.9" r="14.3" fill="#4285f4"/><path d="M2123.2,811.9 H2141.8 M2132.5,802.6 V821.1999999999999" stroke="#fff" stroke-width="2.3" fill="none"/>
 <g transform="translate(2121,855.9)">
  <path d="M2,0 H14.2 L23.1,8.9 V29 a2,2 0 0 1 -2,2 H2 a2,2 0 0 1 -2,-2 V2 a2,2 0 0 1 2,-2 z" fill="#23a566"/>
  <path d="M16.2,8.9 H23.1 V15 z" fill="#188a50" opacity=".55"/>
  <path d="M14.2,0 L23.1,8.9 H16.2 a2,2 0 0 1 -2,-2 z" fill="#8ed1b1"/>
  <rect x="5.6" y="15.3" width="12" height="10" fill="#fff"/>
  <g fill="#23a566"><rect x="7" y="16.7" width="4" height="1.6"/><rect x="12.2" y="16.7" width="4" height="1.6"/><rect x="7" y="19.500" width="4" height="1.6"/><rect x="12.2" y="19.500" width="4" height="1.6"/><rect x="7" y="22.3" width="4" height="1.6"/><rect x="12.2" y="22.3" width="4" height="1.6"/></g>
 </g><polyline points="2498.6,866.4 2504.3999999999996,860.5999999999999 2510.2,866.4" fill="none" stroke="#444746" stroke-width="2.2"/><polyline points="2498.6,875.4 2504.3999999999996,881.1999999999999 2510.2,875.4" fill="none" stroke="#444746" stroke-width="2.2"/>
 <g transform="translate(2121,921.7)">
  <path d="M2,0 H14.2 L23.1,8.9 V29 a2,2 0 0 1 -2,2 H2 a2,2 0 0 1 -2,-2 V2 a2,2 0 0 1 2,-2 z" fill="#23a566"/>
  <path d="M16.2,8.9 H23.1 V15 z" fill="#188a50" opacity=".55"/>
  <path d="M14.2,0 L23.1,8.9 H16.2 a2,2 0 0 1 -2,-2 z" fill="#8ed1b1"/>
  <rect x="5.6" y="15.3" width="12" height="10" fill="#fff"/>
  <g fill="#23a566"><rect x="7" y="16.7" width="4" height="1.6"/><rect x="12.2" y="16.7" width="4" height="1.6"/><rect x="7" y="19.500" width="4" height="1.6"/><rect x="12.2" y="19.500" width="4" height="1.6"/><rect x="7" y="22.3" width="4" height="1.6"/><rect x="12.2" y="22.3" width="4" height="1.6"/></g>
 </g><polyline points="2498.6,932.2 2504.3999999999996,926.4 2510.2,932.2" fill="none" stroke="#444746" stroke-width="2.2"/><polyline points="2498.6,941.2 2504.3999999999996,947.0 2510.2,941.2" fill="none" stroke="#444746" stroke-width="2.2"/>
 <g transform="translate(2121,987.5)">
  <path d="M2,0 H14.2 L23.1,8.9 V29 a2,2 0 0 1 -2,2 H2 a2,2 0 0 1 -2,-2 V2 a2,2 0 0 1 2,-2 z" fill="#23a566"/>
  <path d="M16.2,8.9 H23.1 V15 z" fill="#188a50" opacity=".55"/>
  <path d="M14.2,0 L23.1,8.9 H16.2 a2,2 0 0 1 -2,-2 z" fill="#8ed1b1"/>
  <rect x="5.6" y="15.3" width="12" height="10" fill="#fff"/>
  <g fill="#23a566"><rect x="7" y="16.7" width="4" height="1.6"/><rect x="12.2" y="16.7" width="4" height="1.6"/><rect x="7" y="19.500" width="4" height="1.6"/><rect x="12.2" y="19.500" width="4" height="1.6"/><rect x="7" y="22.3" width="4" height="1.6"/><rect x="12.2" y="22.3" width="4" height="1.6"/></g>
 </g><polyline points="2498.6,998.1 2504.3999999999996,992.3 2510.2,998.1" fill="none" stroke="#444746" stroke-width="2.2"/><polyline points="2498.6,1007.1 2504.3999999999996,1012.9 2510.2,1007.1" fill="none" stroke="#444746" stroke-width="2.2"/>
 <rect x="2117.7" y="1052.800" width="30.5" height="30.2" rx="1.5" fill="#7090b8"/>
 <path d="M2127.9,1066.400 H2132.9 V1063.200 L2138.9,1068.350 L2132.9,1073.500 V1070.300 H2127.9 z" fill="#fff"/>
 <polyline points="2498.6,1063.8999999999999 2504.3999999999996,1058.1 2510.2,1063.8999999999999" fill="none" stroke="#444746" stroke-width="2.2"/><polyline points="2498.6,1072.8999999999999 2504.3999999999996,1078.7 2510.2,1072.8999999999999" fill="none" stroke="#444746" stroke-width="2.2"/>
 <g transform="translate(2121,1118.8)">
  <path d="M2,0 H14.2 L23.1,8.9 V29 a2,2 0 0 1 -2,2 H2 a2,2 0 0 1 -2,-2 V2 a2,2 0 0 1 2,-2 z" fill="#23a566"/>
  <path d="M16.2,8.9 H23.1 V15 z" fill="#188a50" opacity=".55"/>
  <path d="M14.2,0 L23.1,8.9 H16.2 a2,2 0 0 1 -2,-2 z" fill="#8ed1b1"/>
  <rect x="5.6" y="15.3" width="12" height="10" fill="#fff"/>
  <g fill="#23a566"><rect x="7" y="16.7" width="4" height="1.6"/><rect x="12.2" y="16.7" width="4" height="1.6"/><rect x="7" y="19.500" width="4" height="1.6"/><rect x="12.2" y="19.500" width="4" height="1.6"/><rect x="7" y="22.3" width="4" height="1.6"/><rect x="12.2" y="22.3" width="4" height="1.6"/></g>
 </g><polyline points="2498.6,1129.1 2504.3999999999996,1123.3 2510.2,1129.1" fill="none" stroke="#444746" stroke-width="2.2"/><polyline points="2498.6,1138.1 2504.3999999999996,1143.9 2510.2,1138.1" fill="none" stroke="#444746" stroke-width="2.2"/>
 <rect x="2099" y="1730.400" width="431.5" height="1.3" fill="#dadce0"/>
 <circle cx="2127.4" cy="1763.3" r="14.2" fill="#4285f4"/><path d="M2118.1,1763.3 H2136.7000000000003 M2127.4,1754.0 V1772.6" stroke="#fff" stroke-width="2.3" fill="none"/>
</svg>
 <span class="t" style="left:77.2px;top:32.7px;font-size:28.57px;color:#1f1f1f;letter-spacing:0.551px;font-weight:500;-webkit-text-stroke:0.6px #1f1f1f">Data</span>
<span class="t" style="left:60.2px;top:123.8px;font-size:22.56px;color:#5f6368;letter-spacing:-0.88px;-webkit-text-stroke:0.2px #5f6368">Search</span>
<span class="t" style="left:67.3px;top:202.1px;font-size:20.29px;color:#1f1f1f;letter-spacing:0.015px;-webkit-text-stroke:0.2px #1f1f1f">Media spend</span>
<span class="t" style="left:67.9px;top:261.3px;font-size:18.84px;color:#444746;letter-spacing:0.139px;-webkit-text-stroke:0.2px #444746">Analysis Date End</span>
<span class="t" style="left:67.9px;top:304.4px;font-size:18.84px;color:#444746;letter-spacing:0.196px;-webkit-text-stroke:0.2px #444746">Analysis Date Start</span>
<span class="t" style="left:67.9px;top:347.6px;font-size:18.84px;color:#444746;letter-spacing:0.186px;-webkit-text-stroke:0.2px #444746">Analysis Period</span>
<span class="t" style="left:67.9px;top:390.7px;font-size:18.84px;color:#444746;letter-spacing:0.558px;-webkit-text-stroke:0.2px #444746">Channel</span>
<span class="t" style="left:66.9px;top:433.9px;font-size:18.84px;color:#444746;letter-spacing:0.629px;-webkit-text-stroke:0.2px #444746">Label</span>
<span class="t" style="left:67.9px;top:477.0px;font-size:18.84px;color:#444746;letter-spacing:0.034px;-webkit-text-stroke:0.2px #444746">Share Value</span>
<span class="t" style="left:66.9px;top:520.2px;font-size:18.84px;color:#444746;letter-spacing:0.578px;-webkit-text-stroke:0.2px #444746">Record Count</span>
<span class="t" style="left:68.9px;top:565.7px;font-size:20.29px;color:#4285f4;letter-spacing:0.414px;font-weight:500;-webkit-text-stroke:0.5px #4285f4">Add a field</span>
<span class="t" style="left:68.9px;top:610.6px;font-size:20.29px;color:#4285f4;letter-spacing:0.349px;font-weight:500;-webkit-text-stroke:0.5px #4285f4">Add a parameter</span>
<span class="t" style="left:67.2px;top:669.3px;font-size:20.29px;color:#1f1f1f;letter-spacing:0.019px;-webkit-text-stroke:0.2px #1f1f1f">Model diagnostics</span>
<span class="t" style="left:67.2px;top:735.1px;font-size:20.29px;color:#1f1f1f;letter-spacing:0.068px;-webkit-text-stroke:0.2px #1f1f1f">Media outcome</span>
<span class="t" style="left:67.2px;top:801.0px;font-size:20.29px;color:#1f1f1f;letter-spacing:0.298px;-webkit-text-stroke:0.2px #1f1f1f">Model fit</span>
<span class="t" style="left:67.2px;top:866.8px;font-size:20.29px;color:#1f1f1f;letter-spacing:-0.338px;-webkit-text-stroke:0.2px #1f1f1f">Meridian Planner</span>
<span class="t" style="left:67.2px;top:932.0px;font-size:20.29px;color:#1f1f1f;letter-spacing:-0.399px;-webkit-text-stroke:0.2px #1f1f1f">Media ROI</span>
<span class="t" style="left:63.5px;top:1561.8px;font-size:20.29px;color:#4285f4;letter-spacing:0.06px;font-weight:500;-webkit-text-stroke:0.5px #4285f4">Add Data</span>

</aside>
<div class="abs" style="left:0;top:1788px;width:2534px;height:1px;background:#fff"></div>
</body></html>
